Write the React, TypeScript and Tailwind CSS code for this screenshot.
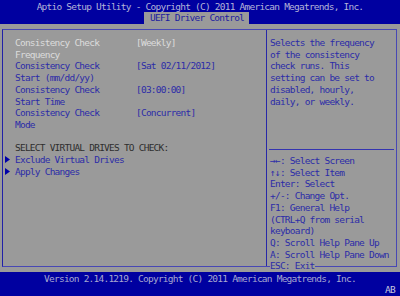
import React from 'react';

const Arrow: React.FC = () => (
  <span className="flex w-[10px] h-[11.7px] items-center">
    <svg width="5" height="7" viewBox="0 0 5 7" aria-hidden>
      <polygon points="0,0 5,3.5 0,7" fill="#0000a8" />
    </svg>
  </span>
);

const settings = [
  { top: 'Consistency Check', bottom: 'Frequency', value: '[Weekly]', active: true },
  { top: 'Consistency Check', bottom: 'Start (mm/dd/yy)', value: '[Sat 02/11/2012]' },
  { top: 'Consistency Check', bottom: 'Start Time', value: '[03:00:00]' },
  { top: 'Consistency Check', bottom: 'Mode', value: '[Concurrent]' },
];

const helpText = [
  'Selects the frequency',
  'of the consistency',
  'check runs. This',
  'setting can be set to',
  'disabled, hourly,',
  'daily, or weekly.',
];

const keyHelp = [
  '→←: Select Screen',
  '↑↓: Select Item',
  'Enter: Select',
  '+/-: Change Opt.',
  'F1: General Help',
  '(CTRL+Q from serial',
  'keyboard)',
  'Q: Scroll Help Pane Up',
  'A: Scroll Help Pane Down',
];

const App: React.FC = () => {
  return (
    <div className="w-[400px] h-[296px] overflow-hidden bg-[#9a9a9a] flex flex-col font-['DejaVu_Sans_Mono',monospace] text-[9.5px] leading-[11.7px] tracking-[-0.77px] whitespace-pre">
      {/* title bar */}
      <div className="h-[24px] shrink-0 bg-[#0000a0] flex flex-col">
        <div className="h-[12px] pt-[1px] text-center text-[#b4b4d8]">
          Aptio Setup Utility - Copyright (C) 2011 American Megatrends, Inc.
        </div>
        <div className="flex pl-[144px]">
          <div className="h-[12px] w-[105px] bg-[#9a9a9a] pl-[6px] text-[#1c1ca0]">UEFI Driver Control</div>
        </div>
      </div>

      {/* main frame */}
      <div className="mt-[5px] ml-[2px] w-[395px] h-[238px] shrink-0 flex border border-[#4848b4] border-l-[#2020a8]">
        <div className="w-[263px] shrink-0 pt-[7px] pl-[12px] flex flex-col">
          {settings.map((s) => (
            <div key={s.bottom} className={`flex ${s.active ? 'text-[#dcdcdc]' : 'text-[#2c2ca8]'}`}>
              <div className="w-[121px]">
                <div>{s.top}</div>
                <div>{s.bottom}</div>
              </div>
              <div>{s.value}</div>
            </div>
          ))}
          <div className="h-[11.7px]" />
          <div className="text-[#2e2e2e]">SELECT VIRTUAL DRIVES TO CHECK:</div>
          <div className="flex -ml-[10px] text-[#2c2ca8]">
            <Arrow />
            <span>Exclude Virtual Drives</span>
          </div>
          <div className="flex -ml-[10px] text-[#2c2ca8]">
            <Arrow />
            <span>Apply Changes</span>
          </div>
        </div>

        <div className="w-[130px] shrink-0 border-l border-[#2828a8] flex flex-col text-[#2c2ca8]">
          <div className="h-[119px] shrink-0 pt-[7px] pl-[3px]">
            {helpText.map((line) => (
              <div key={line}>{line}</div>
            ))}
          </div>
          <div className="shrink-0 mx-[2px] border-t border-[#3434b0] pt-[5px] pl-[1px]">
            {keyHelp.map((line) => (
              <div key={line}>{line}</div>
            ))}
            <div>
              <span className="bg-[#9a9a9a]">ESC: Exit</span>
            </div>
          </div>
        </div>
      </div>

      {/* footer */}
      <div className="mt-[5px] h-[24px] shrink-0 bg-[#0000a0] flex flex-col text-[#a8a8d0]">
        <div className="h-[12px] pt-[1px] text-center">
          Version 2.14.1219. Copyright (C) 2011 American Megatrends, Inc.
        </div>
        <div className="text-right pr-[5px] text-[#c4c4dc]">AB</div>
      </div>
    </div>
  );
};

export default App;
